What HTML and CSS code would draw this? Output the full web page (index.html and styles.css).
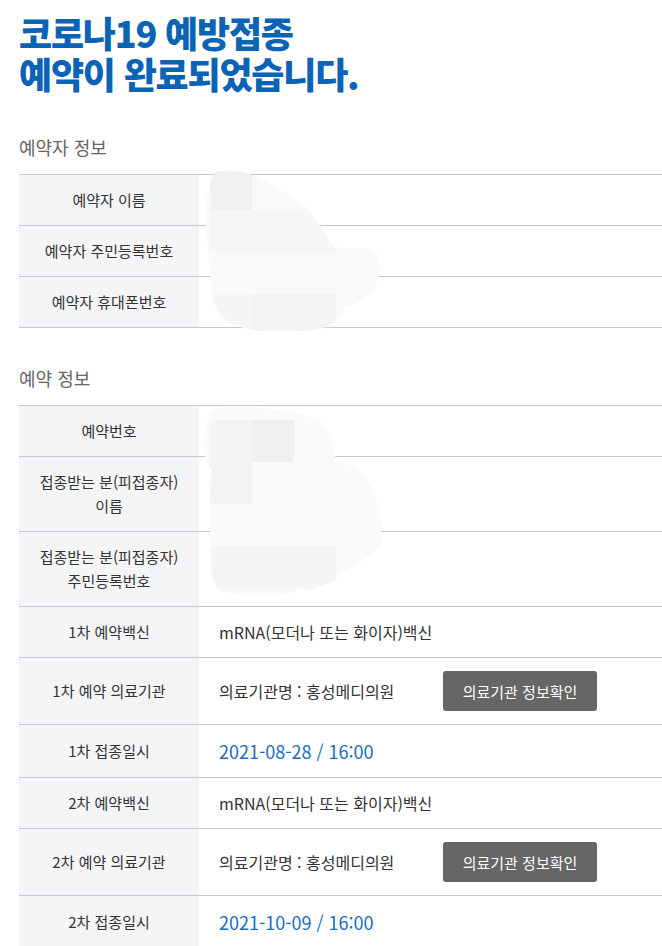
FILE: index.html
```html
<!DOCTYPE html>
<html lang="ko">
<head>
    <meta charset="UTF-8">
    <meta name="viewport" content="width=device-width, initial-scale=1.0">
    <title>코로나19 예방접종 예약 완료</title>
    <link rel="stylesheet" href="styles.css">
</head>
<body>
<div class="page">
    <h1 class="title">코로나19 예방접종<br>예약이 완료되었습니다.</h1>

    <h2 class="section-title">예약자 정보</h2>
    <div class="info-table">
        <div class="row">
            <div class="label">예약자 이름</div>
            <div class="value"></div>
        </div>
        <div class="row">
            <div class="label">예약자 주민등록번호</div>
            <div class="value"></div>
        </div>
        <div class="row">
            <div class="label">예약자 휴대폰번호</div>
            <div class="value"></div>
        </div>
    </div>

    <h2 class="section-title second">예약 정보</h2>
    <div class="info-table">
        <div class="row">
            <div class="label">예약번호</div>
            <div class="value"></div>
        </div>
        <div class="row">
            <div class="label">접종받는 분(피접종자)<br>이름</div>
            <div class="value"></div>
        </div>
        <div class="row">
            <div class="label">접종받는 분(피접종자)<br>주민등록번호</div>
            <div class="value"></div>
        </div>
        <div class="row">
            <div class="label">1차 예약백신</div>
            <div class="value">mRNA(모더나 또는 화이자)백신</div>
        </div>
        <div class="row">
            <div class="label">1차 예약 의료기관</div>
            <div class="value">
                <span class="clinic">의료기관명 : 홍성메디의원</span>
                <button class="button">의료기관 정보확인</button>
            </div>
        </div>
        <div class="row">
            <div class="label">1차 접종일시</div>
            <div class="value date">2021-08-28 / 16:00</div>
        </div>
        <div class="row">
            <div class="label">2차 예약백신</div>
            <div class="value">mRNA(모더나 또는 화이자)백신</div>
        </div>
        <div class="row">
            <div class="label">2차 예약 의료기관</div>
            <div class="value">
                <span class="clinic">의료기관명 : 홍성메디의원</span>
                <button class="button">의료기관 정보확인</button>
            </div>
        </div>
        <div class="row">
            <div class="label">2차 접종일시</div>
            <div class="value date">2021-10-09 / 16:00</div>
        </div>
    </div>

    <!-- blurred-out personal data -->
    <svg class="mask" viewBox="0 0 662 946" width="662" height="946">
        <defs>
            <clipPath id="blob1"><path d="M216 172 C245 166 268 182 292 197 C318 212 322 236 334 247 L372 249 C386 258 384 300 345 306 C338 318 336 330 300 331 L262 331 C222 327 213 312 211 282 C207 240 200 190 216 172 Z"/></clipPath>
            <clipPath id="blob2"><path d="M218 408 C260 404 300 412 318 420 C332 432 336 450 335 460 L334 462 L355 466 C380 490 384 520 380 546 C370 560 345 566 336 580 C300 597 250 598 222 592 C210 585 211 560 210 540 C210 520 208 500 212 470 C205 462 202 450 205 430 C207 415 212 410 218 408 Z"/></clipPath>
        </defs>
        <g clip-path="url(#blob1)">
            <rect x="200" y="165" width="190" height="170" fill="#f9f9f9"/>
            <rect x="210" y="168" width="42" height="42" fill="#f1f1f1"/>
            <rect x="210" y="210" width="126" height="42" fill="#f6f6f6"/>
            <rect x="252" y="294" width="84" height="40" fill="#f3f3f3"/>
            <rect x="210" y="294" width="42" height="40" fill="#f5f5f6"/>
        </g>
        <g clip-path="url(#blob2)">
            <rect x="200" y="400" width="190" height="200" fill="#fafafa"/>
            <rect x="210" y="420" width="42" height="42" fill="#f4f4f4"/>
            <rect x="252" y="420" width="42" height="42" fill="#f0f0f0"/>
            <rect x="210" y="462" width="42" height="42" fill="#f4f4f4"/>
            <rect x="210" y="546" width="126" height="42" fill="#f5f5f5"/>
        </g>
    </svg>
</div>
</body>
</html>
```
FILE: styles.css
```css
body {
    margin: 0;
    background-color: #fff;
    color: #333;
    font-family: 'Noto Sans CJK KR', 'Noto Sans', sans-serif;
}
.page {
    position: relative;
    padding-left: 19px;
    overflow: hidden;
}
.title {
    margin: 12px 0 0;
    color: #0b63b5;
    font-size: 36px;
    line-height: 41px;
    font-weight: 900;
    letter-spacing: -1.2px;
}
.section-title {
    margin: 41px 0 15px;
    color: #666;
    font-size: 18px;
    line-height: 24px;
    font-weight: 400;
}
.section-title.second {
    margin-top: 38px;
}
.info-table {
    border-top: 1px solid #c8c8d0;
}
.row {
    display: grid;
    grid-template-columns: 180px 1fr;
    border-bottom: 1px solid #c8c8d0;
}
.label {
    min-height: 24px;
    padding: 13px 10px;
    background-color: #f4f5f7;
    font-size: 15px;
    line-height: 24px;
    text-align: center;
    display: flex;
    align-items: center;
    justify-content: center;
}
.value {
    padding: 13px 20px;
    font-size: 16px;
    line-height: 24px;
    display: flex;
    align-items: center;
}
.value.date {
    color: #1a6dbf;
    font-size: 18px;
    line-height: 26px;
}
.clinic {
    width: 224px;
}
.button {
    width: 154px;
    height: 40px;
    padding: 0;
    background-color: #666;
    color: #fff;
    border: none;
    border-radius: 3px;
    font-family: 'Noto Sans CJK KR', 'Noto Sans', sans-serif;
    font-size: 15px;
    cursor: pointer;
}
.mask {
    position: absolute;
    top: 0;
    left: 0;
    pointer-events: none;
}
```
